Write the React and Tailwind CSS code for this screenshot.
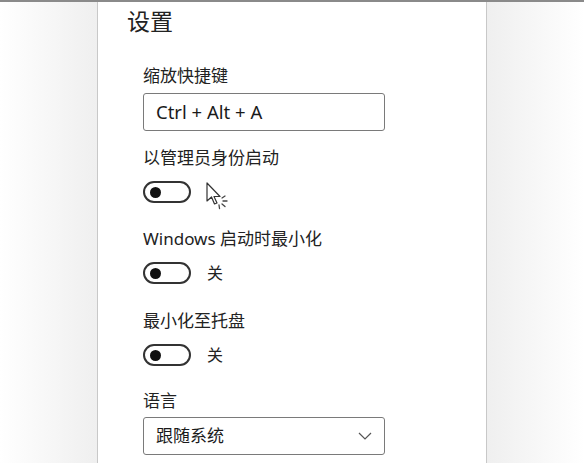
import React from 'react'

const font = { fontFamily: '"Noto Sans", "Noto Sans CJK SC", sans-serif' }

const Toggle = ({ label }) => (
  <div className="flex items-center h-[22px] mt-[12px]">
    <div className="w-[48px] h-[22px] rounded-full border-2 border-[#333] flex items-center pl-[5px]">
      <div className="w-[11px] h-[11px] rounded-full bg-[#111]" />
    </div>
    {label && <span className="ml-[16px] text-[16px] text-[#222]">{label}</span>}
  </div>
)

const Cursor = () => (
  <svg width="26" height="28" viewBox="0 0 26 28" className="ml-[14px] mt-[13px] shrink-0">
    <path d="M2 1 L2 19 L6.5 15 L9.5 22 L12 21 L9 14.5 L15 14.5 Z" fill="#fff" stroke="#333" strokeWidth="1.2" strokeLinejoin="round" />
    <g stroke="#444" strokeWidth="1.3" strokeLinecap="round">
      <line x1="17" y1="16" x2="20" y2="14" />
      <line x1="18" y1="19" x2="22" y2="19" />
      <line x1="17" y1="22" x2="20" y2="24.5" />
      <line x1="14" y1="23" x2="14.5" y2="26.5" />
    </g>
  </svg>
)

const App = () => {
  return (
    <div className="w-[584px] h-[463px] bg-white overflow-hidden border-t-2 border-[#8a8a8a]" style={font}>
      <div className="flex h-full">
        <div className="w-[97px] bg-gradient-to-r from-white to-[#efefef]" />
        <div className="w-[390px] h-full bg-white border-x border-[#c8c8c8] pl-[29px] pt-[4px]">
          <h1 className="text-[23px] leading-[30px] text-[#222]">设置</h1>

          <div className="pl-[16px]">
            <div className="mt-[29px] text-[17px] leading-[22px] text-[#222]">缩放快捷键</div>
            <div className="mt-[6px] w-[242px] h-[38px] border border-[#7a7a7a] rounded-[3px] flex items-center px-[12px] text-[18.5px] text-[#1a1a1a]">
              Ctrl + Alt + A
            </div>

            <div className="mt-[16px] text-[17px] leading-[22px] text-[#222]">以管理员身份启动</div>
            <div className="flex items-start h-[34px]">
              <Toggle />
              <Cursor />
            </div>

            <div className="mt-[25px] text-[17px] leading-[22px] text-[#222]">Windows 启动时最小化</div>
            <Toggle label="关" />

            <div className="mt-[26px] text-[17px] leading-[22px] text-[#222]">最小化至托盘</div>
            <Toggle label="关" />

            <div className="mt-[24px] text-[17px] leading-[22px] text-[#222]">语言</div>
            <div className="mt-[5px] w-[242px] h-[38px] border border-[#7a7a7a] rounded-[3px] flex items-center justify-between pl-[12px] pr-[12px] text-[17px] text-[#1a1a1a]">
              <span>跟随系统</span>
              <svg width="14" height="8" viewBox="0 0 14 8">
                <path d="M1 1 L7 7 L13 1" fill="none" stroke="#555" strokeWidth="1.2" />
              </svg>
            </div>
          </div>
        </div>
        <div className="flex-1 bg-gradient-to-l from-white to-[#efefef]" />
      </div>
    </div>
  )
}

export default App
